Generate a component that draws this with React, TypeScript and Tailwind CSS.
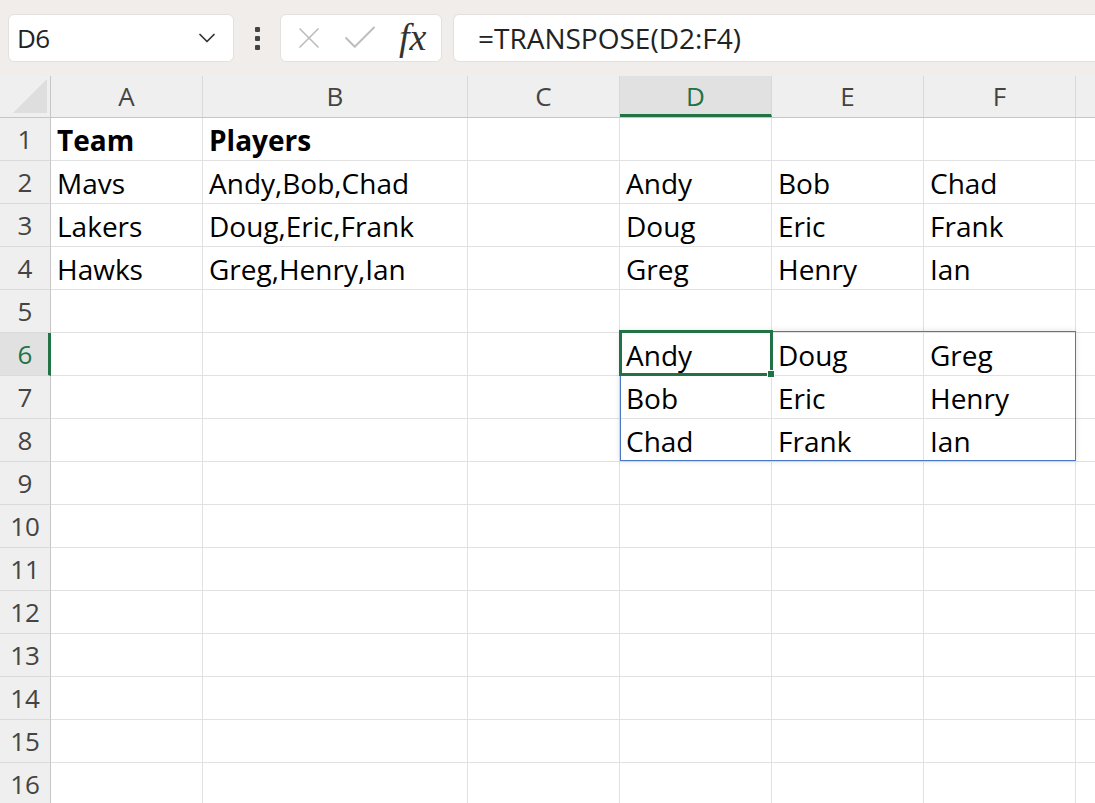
import { ChevronDown, X, Check } from "lucide-react";

const cols = [
  { key: "A", w: "w-[152px]" },
  { key: "B", w: "w-[265px]" },
  { key: "C", w: "w-[152px]" },
  { key: "D", w: "w-[152px]" },
  { key: "E", w: "w-[152px]" },
  { key: "F", w: "w-[152px]" },
  { key: "G", w: "w-[152px]" },
];

const data: Record<string, { text: string; bold?: boolean }> = {
  A1: { text: "Team", bold: true },
  B1: { text: "Players", bold: true },
  A2: { text: "Mavs" },
  B2: { text: "Andy,Bob,Chad" },
  A3: { text: "Lakers" },
  B3: { text: "Doug,Eric,Frank" },
  A4: { text: "Hawks" },
  B4: { text: "Greg,Henry,Ian" },
  D2: { text: "Andy" },
  E2: { text: "Bob" },
  F2: { text: "Chad" },
  D3: { text: "Doug" },
  E3: { text: "Eric" },
  F3: { text: "Frank" },
  D4: { text: "Greg" },
  E4: { text: "Henry" },
  F4: { text: "Ian" },
  D6: { text: "Andy" },
  E6: { text: "Doug" },
  F6: { text: "Greg" },
  D7: { text: "Bob" },
  E7: { text: "Eric" },
  F7: { text: "Henry" },
  D8: { text: "Chad" },
  E8: { text: "Frank" },
  F8: { text: "Ian" },
};

const rows = Array.from({ length: 16 }, (_, i) => i + 1);

export default function App() {
  return (
    <div className="w-[1095px] h-[803px] overflow-hidden bg-white font-['Open_Sans',sans-serif] text-black">
      {/* formula bar */}
      <div className="h-[76px] bg-[#f1edeb] flex items-center pl-2">
        <div className="w-[226px] h-[48px] bg-white rounded-md border border-[#e3e0de] flex items-center justify-between pl-2 pr-3">
          <span className="text-[26px] text-[#222] tracking-[-0.5px]">D6</span>
          <ChevronDown className="w-7 h-7 text-[#333]" strokeWidth={1.5} />
        </div>
        <div className="w-[46px] flex flex-col items-center gap-[4px]">
          <span className="w-[5px] h-[5px] bg-[#444] rounded-[1px]" />
          <span className="w-[5px] h-[5px] bg-[#444] rounded-[1px]" />
          <span className="w-[5px] h-[5px] bg-[#444] rounded-[1px]" />
        </div>
        <div className="w-[162px] h-[48px] bg-white rounded-md border border-[#e3e0de] flex items-center pl-[10px] pr-2">
          <X className="w-[36px] h-[36px] text-[#bdbdbd]" strokeWidth={1.1} />
          <Check className="w-[42px] h-[42px] text-[#bdbdbd] ml-[12px]" strokeWidth={1.1} />
          <span className="font-['Liberation_Serif',serif] italic text-[38px] text-[#333] leading-none ml-[18px] mb-[2px]">fx</span>
        </div>
        <div className="ml-[11px] flex-1 h-[48px] bg-white rounded-l-md border border-r-0 border-[#e3e0de] flex items-center pl-6">
          <span className="text-[28px] text-[#222]">=TRANSPOSE(D2:F4)</span>
        </div>
      </div>

      {/* sheet */}
      <div className="relative">
        <div className="flex h-[42px] bg-[#efefef] border-b border-[#c6c6c6]">
          <div className="w-[51px] shrink-0 border-r border-[#c6c6c6] relative">
            <div className="absolute right-[3px] bottom-[4px] w-0 h-0 border-l-[34px] border-l-transparent border-b-[34px] border-b-[#dedede]" />
          </div>
          {cols.map((c) => (
            <div
              key={c.key}
              className={`${c.w} shrink-0 flex items-center justify-center text-[26px] border-r border-[#d9d9d9] ${
                c.key === "D" ? "bg-[#e1e1e1] text-[#217346] border-b-[3px] border-b-[#217346] pt-[3px]" : "text-[#444]"
              }`}
            >
              {c.key === "G" ? "" : c.key}
            </div>
          ))}
        </div>

        {rows.map((r) => (
          <div key={r} className="flex h-[43px]">
            <div
              className={`w-[51px] shrink-0 flex items-center justify-center text-[26px] border-b border-[#dadada] ${
                r === 6
                  ? "bg-[#e1e1e1] text-[#217346] border-r-[3px] border-r-[#217346] pl-[2px]"
                  : "bg-[#efefef] text-[#444] border-r border-r-[#c6c6c6]"
              }`}
            >
              {r}
            </div>
            {cols.map((c) => {
              const cell = data[`${c.key}${r}`];
              return (
                <div
                  key={c.key}
                  className={`${c.w} shrink-0 border-r border-b border-[#e1e1e1] flex items-center pl-[6px] pt-[1px] text-[28px] whitespace-nowrap ${
                    cell?.bold ? "font-bold" : ""
                  }`}
                >
                  {cell?.text}
                </div>
              );
            })}
          </div>
        ))}

        {/* spill range */}
        <div className="absolute left-[620px] top-[255px] w-[456px] h-[130px] border border-[#4a78c8] shadow-[0_0_6px_rgba(0,0,0,0.12)] pointer-events-none" />
        {/* active cell */}
        <div className="absolute left-[619px] top-[254px] w-[154px] h-[46px] border-[3px] border-[#217346] pointer-events-none" />
        <div className="absolute left-[767px] top-[294px] w-[8px] h-[8px] bg-[#217346] border border-white pointer-events-none" />
      </div>
    </div>
  );
}
